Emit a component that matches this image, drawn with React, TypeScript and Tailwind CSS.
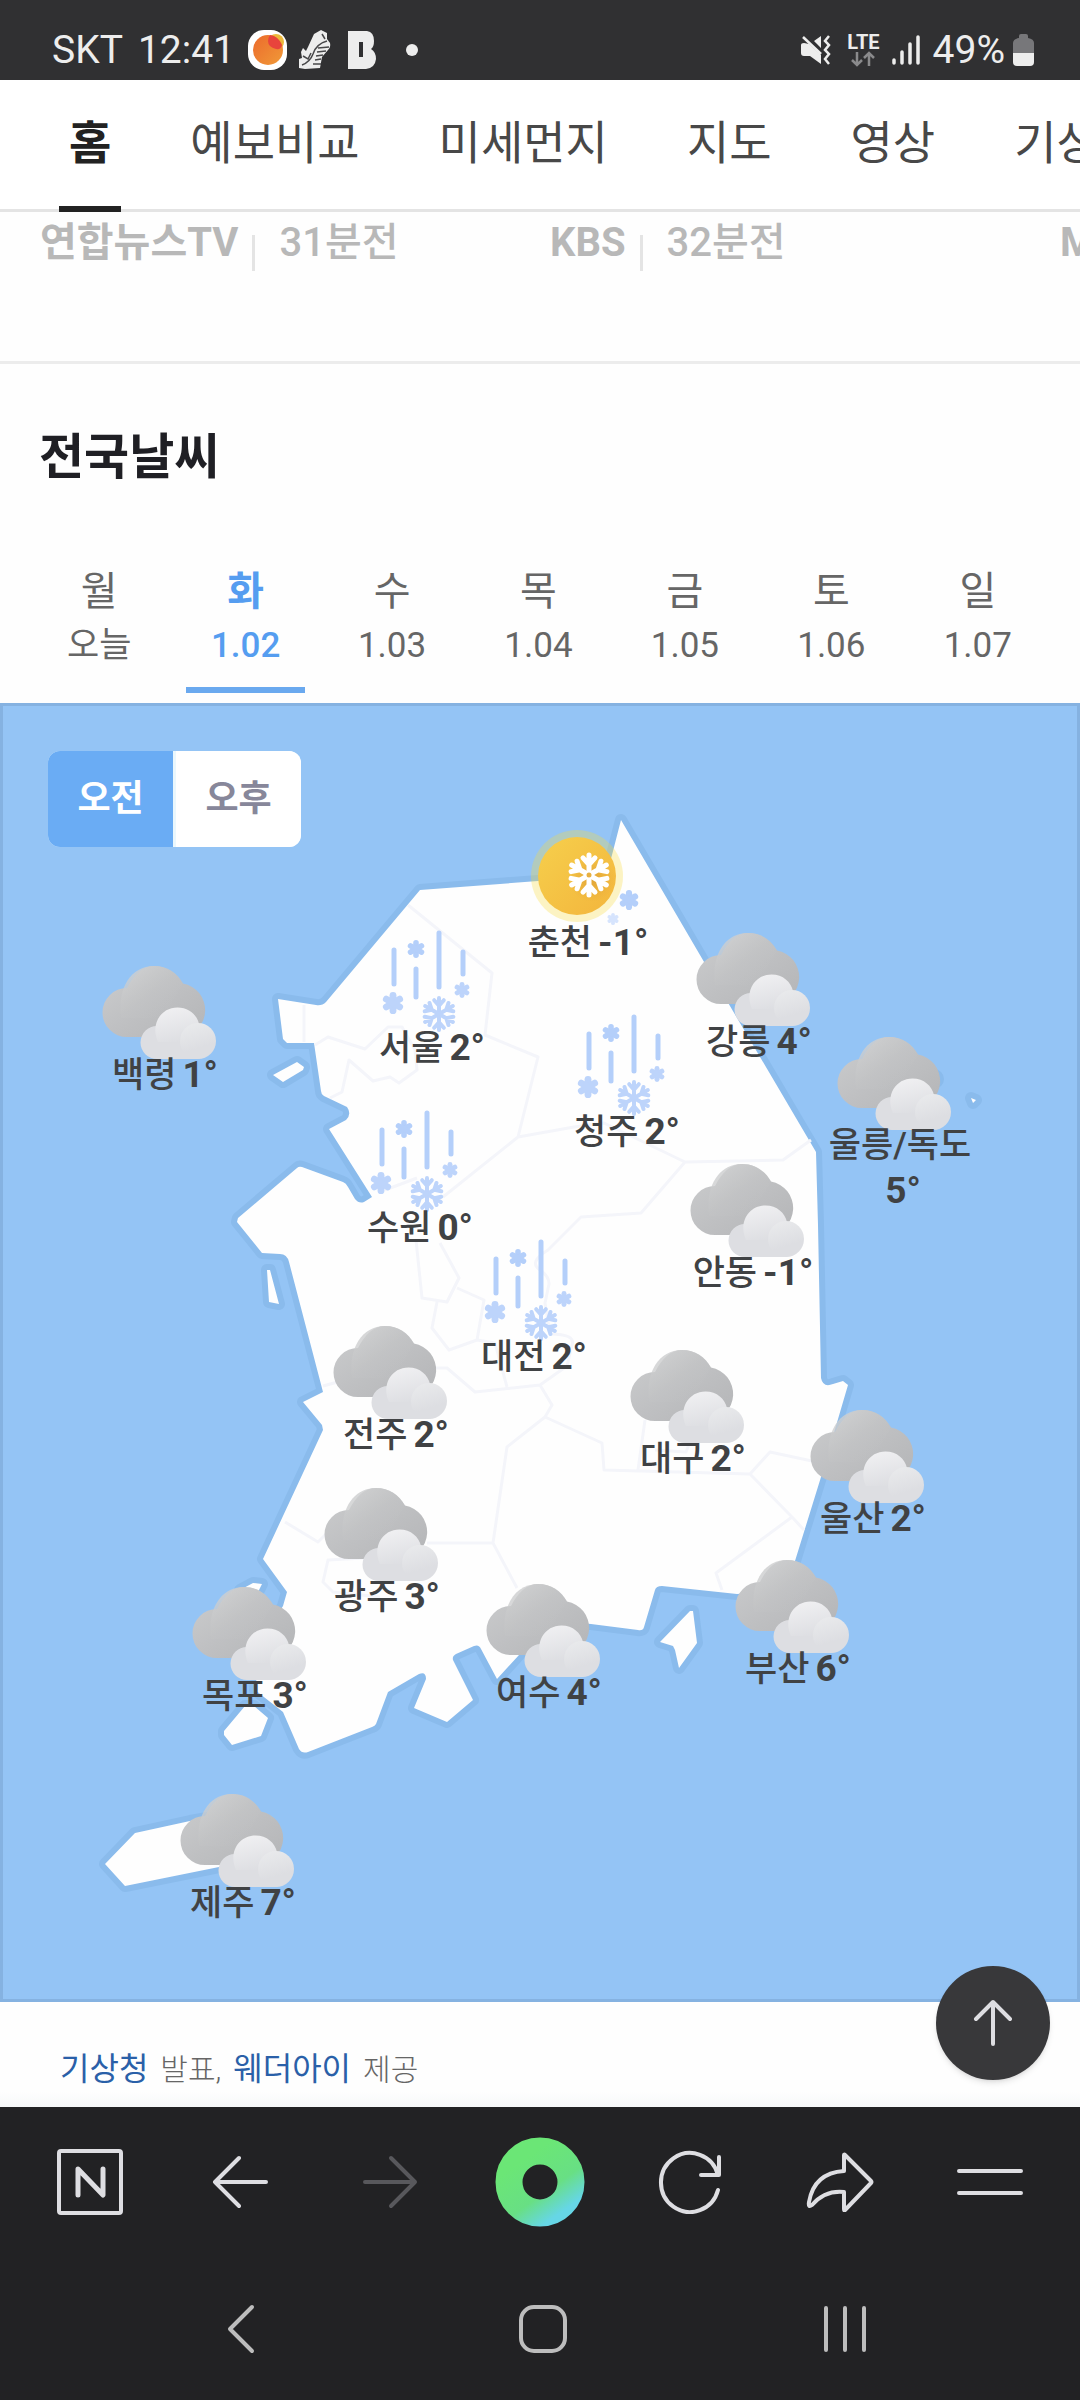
import React, { useState } from "react";

const MAP_TOP = 703;
const MAP_WIDTH = 1080;
const MAP_HEIGHT = 1299;

type IconKind = "cloud" | "sleet" | "sunSnow";
type City = { name: string; temp: string; icon: IconKind; x: number; y: number };

const CITIES: City[] = [
  { name: "백령", temp: "1°", icon: "cloud", x: 165, y: 951 },
  { name: "춘천", temp: "-1°", icon: "sunSnow", x: 588, y: 819 },
  { name: "강릉", temp: "4°", icon: "cloud", x: 759, y: 918 },
  { name: "서울", temp: "2°", icon: "sleet", x: 432, y: 924 },
  { name: "청주", temp: "2°", icon: "sleet", x: 627, y: 1008 },
  { name: "울릉/독도", temp: "5°", icon: "cloud", x: 900, y: 1022 },
  { name: "수원", temp: "0°", icon: "sleet", x: 420, y: 1104 },
  { name: "안동", temp: "-1°", icon: "cloud", x: 753, y: 1149 },
  { name: "대전", temp: "2°", icon: "sleet", x: 534, y: 1233 },
  { name: "전주", temp: "2°", icon: "cloud", x: 396, y: 1311 },
  { name: "대구", temp: "2°", icon: "cloud", x: 693, y: 1335 },
  { name: "울산", temp: "2°", icon: "cloud", x: 873, y: 1395 },
  { name: "광주", temp: "3°", icon: "cloud", x: 387, y: 1473 },
  { name: "부산", temp: "6°", icon: "cloud", x: 798, y: 1545 },
  { name: "목포", temp: "3°", icon: "cloud", x: 255, y: 1572 },
  { name: "여수", temp: "4°", icon: "cloud", x: 549, y: 1569 },
  { name: "제주", temp: "7°", icon: "cloud", x: 243, y: 1779 },
];

const TABS = ["홈", "예보비교", "미세먼지", "지도", "영상", "기상특보"];

const NEWS = [
  { source: "연합뉴스TV", time: "31분전" },
  { source: "KBS", time: "32분전" },
  { source: "MBC", time: "33분전" },
];

const DAYS = [
  { day: "월", date: "오늘" },
  { day: "화", date: "1.02" },
  { day: "수", date: "1.03" },
  { day: "목", date: "1.04" },
  { day: "금", date: "1.05" },
  { day: "토", date: "1.06" },
  { day: "일", date: "1.07" },
];

function Blossom({ x, y, r, fill }: { x: number; y: number; r: number; fill: string }) {
  return (
    <g transform={`translate(${x} ${y})`} stroke={fill} strokeWidth={r * 0.62} strokeLinecap="round">
      {[0, 60, 120].map((a) => (
        <line key={a} x1="0" x2="0" y1={-r * 0.7} y2={r * 0.7} transform={`rotate(${a})`} />
      ))}
    </g>
  );
}

function Snowflake({ x, y, r, stroke, width }: { x: number; y: number; r: number; stroke: string; width: number }) {
  return (
    <g
      transform={`translate(${x} ${y})`}
      stroke={stroke}
      strokeWidth={width}
      strokeLinecap="round"
      strokeLinejoin="round"
      fill="none"
    >
      {[0, 60, 120, 180, 240, 300].map((a) => (
        <path
          key={a}
          transform={`rotate(${a})`}
          d={`M0 0V${-r}M${-r * 0.3} ${-r * 0.86}L0 ${-r * 0.52}L${r * 0.3} ${-r * 0.86}`}
        />
      ))}
    </g>
  );
}

function CloudArt() {
  return (
    <g transform="translate(4 15)">
      <path
        fill="url(#cloudDark)"
        d="M24 71A24 24 0 1 1 24 22C31 8 40 0 51 0C64 0 74 7 80 17.500A27 27 0 0 1 77 71Z"
      />
      <path fill="url(#cloudSheen)" d="M18 52C14 22 28 0 51 0C64 0 74 7 80 17.500L60 52Z" />
      <path fill="#dddee2" d="M54 93A16 16 0 0 1 54 60H95A17 17 0 0 1 95 93Z" />
      <path fill="url(#cloudLight)" d="M55 76C47 58 58 41.500 74.500 41.500C86 41.500 94 49 96 58C88 60 80 66 77 76Z" />
      <circle cx="95" cy="75" r="18" fill="url(#cloudLightB)" />
    </g>
  );
}

function SleetArt() {
  return (
    <g>
      <g stroke="#b4cffa" strokeWidth="5" strokeLinecap="round">
        <path d="M28 26V60M50 45V73M73 9V63M97 28V50" />
      </g>
      <Blossom x={50} y={25} r={9} fill="#b4cffa" />
      <Blossom x={96} y={66} r={8} fill="#bdd4fb" />
      <Blossom x={27} y={79} r={11} fill="#bdd4fb" />
      <Snowflake x={73} y={90} r={16} stroke="#bdd4fb" width={4} />
    </g>
  );
}

function SunSnowArt() {
  return (
    <g>
      <circle cx="55" cy="57" r="46" fill="#f8d93c" fillOpacity="0.3" />
      <circle cx="55" cy="57" r="39" fill="url(#sun)" />
      <circle cx="70" cy="60" r="23" fill="url(#sunShade)" />
      <Snowflake x={67} y={56} r={20} stroke="#ffffff" width={5} />
      <circle cx="67" cy="56" r="2.500" fill="#e8b040" />
      <Blossom x={107} y={81} r={10} fill="#b4cffa" />
      <Blossom x={91} y={100} r={6} fill="#d6e4fd" />
    </g>
  );
}

function CityPin({ city }: { city: City }) {
  return (
    <div
      className="absolute flex w-[164px] -translate-x-1/2 flex-col items-center"
      style={{
        left: `${(city.x / MAP_WIDTH) * 100}%`,
        top: `${((city.y - MAP_TOP) / MAP_HEIGHT) * 100}%`,
      }}
    >
      <svg aria-hidden="true" width="132" height="101" viewBox="0 0 132 101" className="shrink-0 overflow-visible">
        {city.icon === "cloud" && <CloudArt />}
        {city.icon === "sleet" && <SleetArt />}
        {city.icon === "sunSnow" && <SunSnowArt />}
      </svg>
      <p className="text-center text-[35px] leading-[45px] font-medium break-keep text-[#404244]">
        {city.name}
        <strong className="ml-1.5 inline-block text-[37px] font-bold">{city.temp}</strong>
      </p>
    </div>
  );
}

const LAND = [
  "M621 820L707 967L816 1152L818 1225L821 1378Q823 1388 833 1384L843 1381L848 1385L821 1477L795 1561L786 1590L737 1594L662 1586Q656 1586 655 1590L644 1627Q643 1631 638 1630L591 1624L545 1620L519 1655L497 1679L481 1649Q479 1644 474 1646L456 1654Q452 1656 453 1660L473 1700L447 1722L414 1708L426 1679Q426 1671 419 1674L388 1692L376 1724Q375 1726 372 1727L308 1752Q302 1754 299 1749L283 1712L255 1690L262 1640L283 1606L287 1592L263 1559L323 1430L322 1425L303 1402L323 1392L289 1262Q287 1254 280 1254L262 1253L237 1222L238 1218L297 1168Q299 1166 302 1167L343 1182Q346 1183 348 1187L355 1199Q359 1204 364 1202L372 1197L329 1129L346 1120Q352 1114 347 1107L324 1096Q321 1094 321 1091L314 1043L287 1043L283 1039L278 999L316 1005Q322 1006 326 1002L420 890L538 881L606 877L612 855Z",
  "M273 1075L297 1062L304 1067L303 1070L283 1082Z",
  "M267 1270H270L279 1304L269 1302Z",
  "M690 1611H693L697 1643L679 1668L675 1650L673 1646L660 1642Z",
  "M245 1706L254 1706L268 1718L261 1736L232 1745L224 1735V1731Z",
  "M240 1590L253 1583L262 1584L258 1592Z",
  "M135 1833L190 1821L230 1814L250 1850L219 1867L125 1886L105 1864Z",
  "M971 1098L976 1100L973 1103Z",
].join("");

const BORDERS = [
  "M408 905L492 973L485 1035L538 1057L518 1137L443 1197M518 1137L574 1127L604 1123L685 1162L783 1160L811 1140",
  "M685 1162L641 1213L581 1217L548 1250Q528 1262 540 1270Q549 1276 549 1284L545 1303L550 1334Q576 1334 572 1345L567 1366L540 1385L475 1392L447 1368H430",
  "M540 1385L552 1405L545 1417L507 1447L493 1543H427M493 1543L517 1588M545 1417L602 1443L604 1470L750 1474L770 1452L812 1461M750 1474L792 1517L804 1530M792 1517L716 1573L722 1590M645 1420L638 1470M655 1450L686 1452L690 1442",
  "M365 1558L328 1560L323 1582L333 1592L380 1597M285 1522L318 1542L327 1533",
  "M416 1240L422 1298L447 1302L459 1278L440 1243M457 1288L484 1300L477 1340L449 1350L432 1328L437 1302M477 1340L495 1343L507 1387M323 1386L345 1380",
  "M304 1005V1042M315 1045L328 1037L365 1049L388 1027H402L415 1050L417 1070L399 1083L390 1077L373 1081L349 1060L342 1092L330 1098M385 1190L417 1178",
].join("");

function KoreaMap() {
  return (
    <svg
      aria-label="전국 지도"
      role="img"
      viewBox={`0 ${MAP_TOP} ${MAP_WIDTH} ${MAP_HEIGHT}`}
      className="block h-auto w-full"
    >
      <defs>
        <linearGradient id="cloudDark" x1="0" y1="0" x2="1" y2="1">
          <stop offset="0" stopColor="#cccdce" />
          <stop offset="0.5" stopColor="#bfc0c2" />
          <stop offset="1" stopColor="#b4b5b7" />
        </linearGradient>
        <linearGradient id="cloudSheen" x1="0" y1="0" x2="0.800" y2="0.900">
          <stop offset="0" stopColor="#d3d4d5" />
          <stop offset="0.600" stopColor="#c3c4c5" stopOpacity="0.500" />
          <stop offset="1" stopColor="#bfc0c2" stopOpacity="0" />
        </linearGradient>
        <linearGradient id="cloudLight" x1="0.300" y1="0" x2="0.600" y2="1">
          <stop offset="0" stopColor="#f0f0f2" />
          <stop offset="1" stopColor="#dddee2" />
        </linearGradient>
        <linearGradient id="cloudLightB" x1="0.300" y1="0" x2="0.600" y2="1">
          <stop offset="0" stopColor="#e9eaec" />
          <stop offset="0.700" stopColor="#dddee2" />
        </linearGradient>
        <linearGradient id="sun" x1="0" y1="0" x2="1" y2="1">
          <stop offset="0" stopColor="#f6cf4c" />
          <stop offset="1" stopColor="#f3b53c" />
        </linearGradient>
        <radialGradient id="sunShade">
          <stop offset="0" stopColor="#d89a32" stopOpacity="0.700" />
          <stop offset="1" stopColor="#e0a038" stopOpacity="0" />
        </radialGradient>
      </defs>
      <circle cx="934" cy="1079" r="10" fill="#8abbec" />
      <path d={LAND} fill="#8abbec" stroke="#8abbec" strokeWidth="12" strokeLinejoin="round" />
      <path d={LAND} fill="#fefefe" />
      <path d={BORDERS} fill="none" stroke="#f4f5fa" strokeWidth="3" strokeLinejoin="round" />
    </svg>
  );
}

function StatusBar() {
  return (
    <header className="flex items-center justify-between bg-[#303032] pt-[26px] pr-[46px] pb-1.5 pl-[52px] text-[39px] leading-[48px] text-[#ededed]">
      <div className="flex items-center">
        <span>SKT</span>
        <time className="ml-[15px]">12:41</time>
        <svg aria-hidden="true" className="ml-[13px]" width="39" height="40" viewBox="0 0 39 40">
          <defs>
            <linearGradient id="orange" x1="0" y1="0" x2="1" y2="1">
              <stop offset="0" stopColor="#ec6a2c" />
              <stop offset="1" stopColor="#f09a38" />
            </linearGradient>
          </defs>
          <rect width="39" height="40" rx="16" fill="#fff" />
          <circle cx="28" cy="12" r="8" fill="#ecb93c" />
          <circle cx="20" cy="20" r="15" fill="url(#orange)" />
          <path d="M22 5Q30 6 34 15Q33 20 28 19Q20 17 20 11Q20 8 22 5Z" fill="#e8443c" />
        </svg>
        <svg aria-hidden="true" className="ml-3" width="32" height="40" viewBox="0 0 32 40">
          <path
            d="M15 4L22 0L28 3V9L31 13Q32 17 29 20L23 27L21 38L6 39L0 38V29L3 28L2 22L4 18L7 21L9 17Z"
            fill="#ededed"
          />
          <path
            d="M3 35Q11 32 14 24Q17 14 28 11M19 18L30 17M18 22L27 21M17 26L24 25M16 30L22 29M14 34L22 34M23 4L26 9M4 26L9 29L12 23"
            fill="none"
            stroke="#48484a"
            strokeWidth="1.500"
          />
        </svg>
        <svg aria-hidden="true" className="ml-[17px]" width="28" height="38" viewBox="0 0 28 38">
          <path
            fillRule="evenodd"
            d="M0 0H19Q26 1 26 10Q26 16 23 18Q28 21 28 28Q27 37 18 38H0ZM11 11V26H15V11Z"
            fill="#ededed"
          />
        </svg>
        <span className="ml-[30px] size-3 rounded-full bg-[#ededed]" />
      </div>
      <div className="flex items-center">
        <svg aria-hidden="true" width="31" height="30" viewBox="0 0 31 30" fill="none">
          <path d="M1 10Q1 8 4 8L9 9L21 20V29L10 21H4Q1 21 1 18ZM14 6L21 1V13Z" fill="#ededed" />
          <path d="M3 2L21 19" stroke="#ededed" strokeWidth="2.500" />
          <path d="M29 1L25 6L29 10L25 15L29 19L25 24L29 29" stroke="#ededed" strokeWidth="2.500" />
        </svg>
        <div className="ml-4 flex flex-col items-center">
          <span className="text-[20px] leading-[18px] font-bold">LTE</span>
          <svg aria-hidden="true" width="24" height="16" viewBox="0 0 24 16" fill="none" stroke="#8a8a8c" strokeWidth="2.500">
            <path d="M6 1V14M1 9L6 14L11 9M18 15V2M13 7L18 2L23 7" />
          </svg>
        </div>
        <svg
          aria-hidden="true"
          className="ml-3"
          width="28"
          height="30"
          viewBox="0 0 28 30"
          stroke="#ededed"
          strokeWidth="3.500"
          strokeLinecap="round"
        >
          <path d="M2 25V28M10 17V28M18 9V28M26 2V28" />
        </svg>
        <span className="ml-[13px]">49%</span>
        <svg aria-hidden="true" className="ml-2" width="21" height="32" viewBox="0 0 21 32">
          <path d="M6 2Q6 0 8 0H13Q15 0 15 2V4Q21 5 21 9V19H0V9Q0 5 6 4Z" fill="#77777a" />
          <path d="M0 19H21V28Q21 32 17 32H4Q0 32 0 28Z" fill="#ededed" />
        </svg>
      </div>
    </header>
  );
}

const LINE = {
  fill: "none",
  stroke: "#dedee2",
  strokeWidth: 4,
  strokeLinecap: "round" as const,
  strokeLinejoin: "round" as const,
};

function ToolButton({ label, children }: { label: string; children: React.ReactNode }) {
  return (
    <button type="button" aria-label={label} className="flex items-center justify-center">
      {children}
    </button>
  );
}

export default function App() {
  const [tab, setTab] = useState("홈");
  const [day, setDay] = useState("화");
  const [half, setHalf] = useState("오전");

  return (
    <div className="flex min-h-screen flex-col overflow-hidden bg-[#fefefe] font-['Roboto','Noto_Sans_CJK_KR',sans-serif]">
      <StatusBar />

      <nav className="flex gap-[59px] overflow-hidden bg-white pl-[59px] shadow-[inset_0_-3px_0_#e4e4e4]">
        {TABS.map((t) => (
          <button
            key={t}
            type="button"
            onClick={() => setTab(t)}
            className={
              t === tab
                ? "shrink-0 border-b-[6px] border-[#222] px-2.5 text-[46px] leading-[126px] font-bold whitespace-nowrap text-[#222]"
                : "shrink-0 border-b-[6px] border-transparent px-2.5 text-[46px] leading-[126px] whitespace-nowrap text-[#484848]"
            }
          >
            {t}
          </button>
        ))}
      </nav>

      <ul className="flex overflow-hidden border-b-[3px] border-[#ececec] pt-[7px] pb-[90px] pl-[40px] text-[40px] leading-[48px] text-[#b8b8b8]">
        {NEWS.map((n) => (
          <li key={n.source} className="flex w-[510px] shrink-0">
            <span className="font-bold">{n.source}</span>
            <span className="mx-[14px] mt-4 h-9 w-[3px] bg-[#e4e4e4]" />
            <span className="pl-2.5 font-medium">{n.time}</span>
          </li>
        ))}
      </ul>

      <main>
        <h2 className="px-[39px] pt-[64px] text-[49px] leading-[60px] font-bold text-[#1f1f24]">전국날씨</h2>

        <div className="grid grid-cols-7 pt-[80px] pr-[29px] pb-[10px] pl-[26px]">
          {DAYS.map((d) => (
            <button
              key={d.day}
              type="button"
              onClick={() => setDay(d.day)}
              className={
                d.day === day
                  ? "mx-[14px] flex flex-col items-center border-b-[6px] border-[#6aa9ef] pb-[11px] text-[#559df0]"
                  : "mx-[14px] flex flex-col items-center border-b-[6px] border-transparent pb-[11px] text-[#666]"
              }
            >
              <span className={d.day === day ? "text-[40px] leading-[48px] font-bold" : "text-[40px] leading-[48px]"}>
                {d.day}
              </span>
              <span className={d.day === day ? "text-[35px] leading-[60px] font-medium" : "text-[35px] leading-[60px]"}>
                {d.date}
              </span>
            </button>
          ))}
        </div>

        <section className="relative bg-[#94c4f5]">
          <KoreaMap />
          <div className="pointer-events-none absolute inset-0 border-[3px] border-[#85b2e1]" />
          {CITIES.map((c) => (
            <CityPin key={c.name} city={c} />
          ))}
          <div className="absolute top-[48px] left-[48px] flex gap-[3px] overflow-hidden rounded-xl bg-[#eaf7fd] text-[36px] leading-[96px] font-bold">
            {["오전", "오후"].map((h) => (
              <button
                key={h}
                type="button"
                onClick={() => setHalf(h)}
                className={h === half ? "w-[125px] bg-[#6aacf4] text-white" : "w-[125px] bg-white text-[#87879a]"}
              >
                {h}
              </button>
            ))}
          </div>
        </section>
      </main>

      <footer className="relative flex items-baseline gap-3 bg-gradient-to-t from-[#f6f8f9] to-[#fefefe] to-15% px-[60px] pt-[43px] pb-[13px] text-[30px] leading-[48px] font-light text-[#666]">
        <p className="flex items-baseline gap-3">
          <a href="#kma" className="text-[32px] font-normal text-[#2a60a8]">
            기상청
          </a>
          <span>발표,</span>
        </p>
        <p className="flex items-baseline gap-3">
          <a href="#weatheri" className="text-[32px] font-normal text-[#2a60a8]">
            웨더아이
          </a>
          <span>제공</span>
        </p>
        <button
          type="button"
          aria-label="맨 위로"
          className="absolute right-[30px] bottom-[27px] flex size-[114px] items-center justify-center rounded-full bg-[#38383a] shadow-md"
        >
          <svg width="40" height="48" viewBox="0 0 40 48" {...LINE}>
            <path d="M20 45V3M3 20L20 3L37 20" />
          </svg>
        </button>
      </footer>

      <div className="bg-[#222224]">
        <div className="grid h-[150px] grid-cols-7 px-[15px]">
          <ToolButton label="네이버 홈">
            <svg width="66" height="66" viewBox="0 0 66 66" {...LINE}>
              <rect x="2" y="2" width="62" height="62" rx="2" />
              <path d="M21 46V20L46 46V20" strokeWidth="5" />
            </svg>
          </ToolButton>
          <ToolButton label="뒤로">
            <svg width="56" height="56" viewBox="0 0 56 56" {...LINE}>
              <path d="M54 28H3M27 4L3 28L27 52" />
            </svg>
          </ToolButton>
          <ToolButton label="앞으로">
            <svg width="56" height="56" viewBox="0 0 56 56" {...LINE} stroke="#58585c">
              <path d="M3 28H53M29 4L53 28L29 52" />
            </svg>
          </ToolButton>
          <ToolButton label="그린닷">
            <svg width="90" height="90" viewBox="0 0 90 90">
              <defs>
                <linearGradient id="dot" x1="0.300" y1="0.100" x2="0.900" y2="0.950">
                  <stop offset="0" stopColor="#6be676" />
                  <stop offset="0.600" stopColor="#68df84" />
                  <stop offset="1" stopColor="#66d6e6" />
                </linearGradient>
              </defs>
              <circle cx="45" cy="45" r="31" fill="none" stroke="url(#dot)" strokeWidth="27" />
            </svg>
          </ToolButton>
          <ToolButton label="새로고침">
            <svg width="64" height="64" viewBox="0 0 64 64" {...LINE}>
              <path d="M60 40A29 29.500 0 1 1 60 25M61 7V25H43" />
            </svg>
          </ToolButton>
          <ToolButton label="공유">
            <svg width="68" height="60" viewBox="0 0 68 60" {...LINE}>
              <path d="M38 3Q38 2 39 3L65 29Q66 30 65 31L39 58Q38 59 38 57V40Q19 38 6 53Q2 56 3 50Q8 21 38 19Z" />
            </svg>
          </ToolButton>
          <ToolButton label="메뉴">
            <svg width="66" height="26" viewBox="0 0 66 26" {...LINE}>
              <path d="M2 2H64M2 24H64" />
            </svg>
          </ToolButton>
        </div>
        <div className="grid h-[144px] grid-cols-3 pr-[84px] pl-[90px]">
          <ToolButton label="이전 화면">
            <svg width="28" height="50" viewBox="0 0 28 50" {...LINE} stroke="#bdbdbd">
              <path d="M25 3L3 25L25 47" />
            </svg>
          </ToolButton>
          <ToolButton label="홈 화면">
            <svg width="48" height="48" viewBox="0 0 48 48" {...LINE} stroke="#bdbdbd">
              <rect x="2" y="2" width="44" height="44" rx="13" />
            </svg>
          </ToolButton>
          <ToolButton label="최근 앱">
            <svg width="44" height="48" viewBox="0 0 44 48" {...LINE} stroke="#bdbdbd">
              <path d="M3 3V45M22 3V45M41 3V45" />
            </svg>
          </ToolButton>
        </div>
      </div>
    </div>
  );
}
